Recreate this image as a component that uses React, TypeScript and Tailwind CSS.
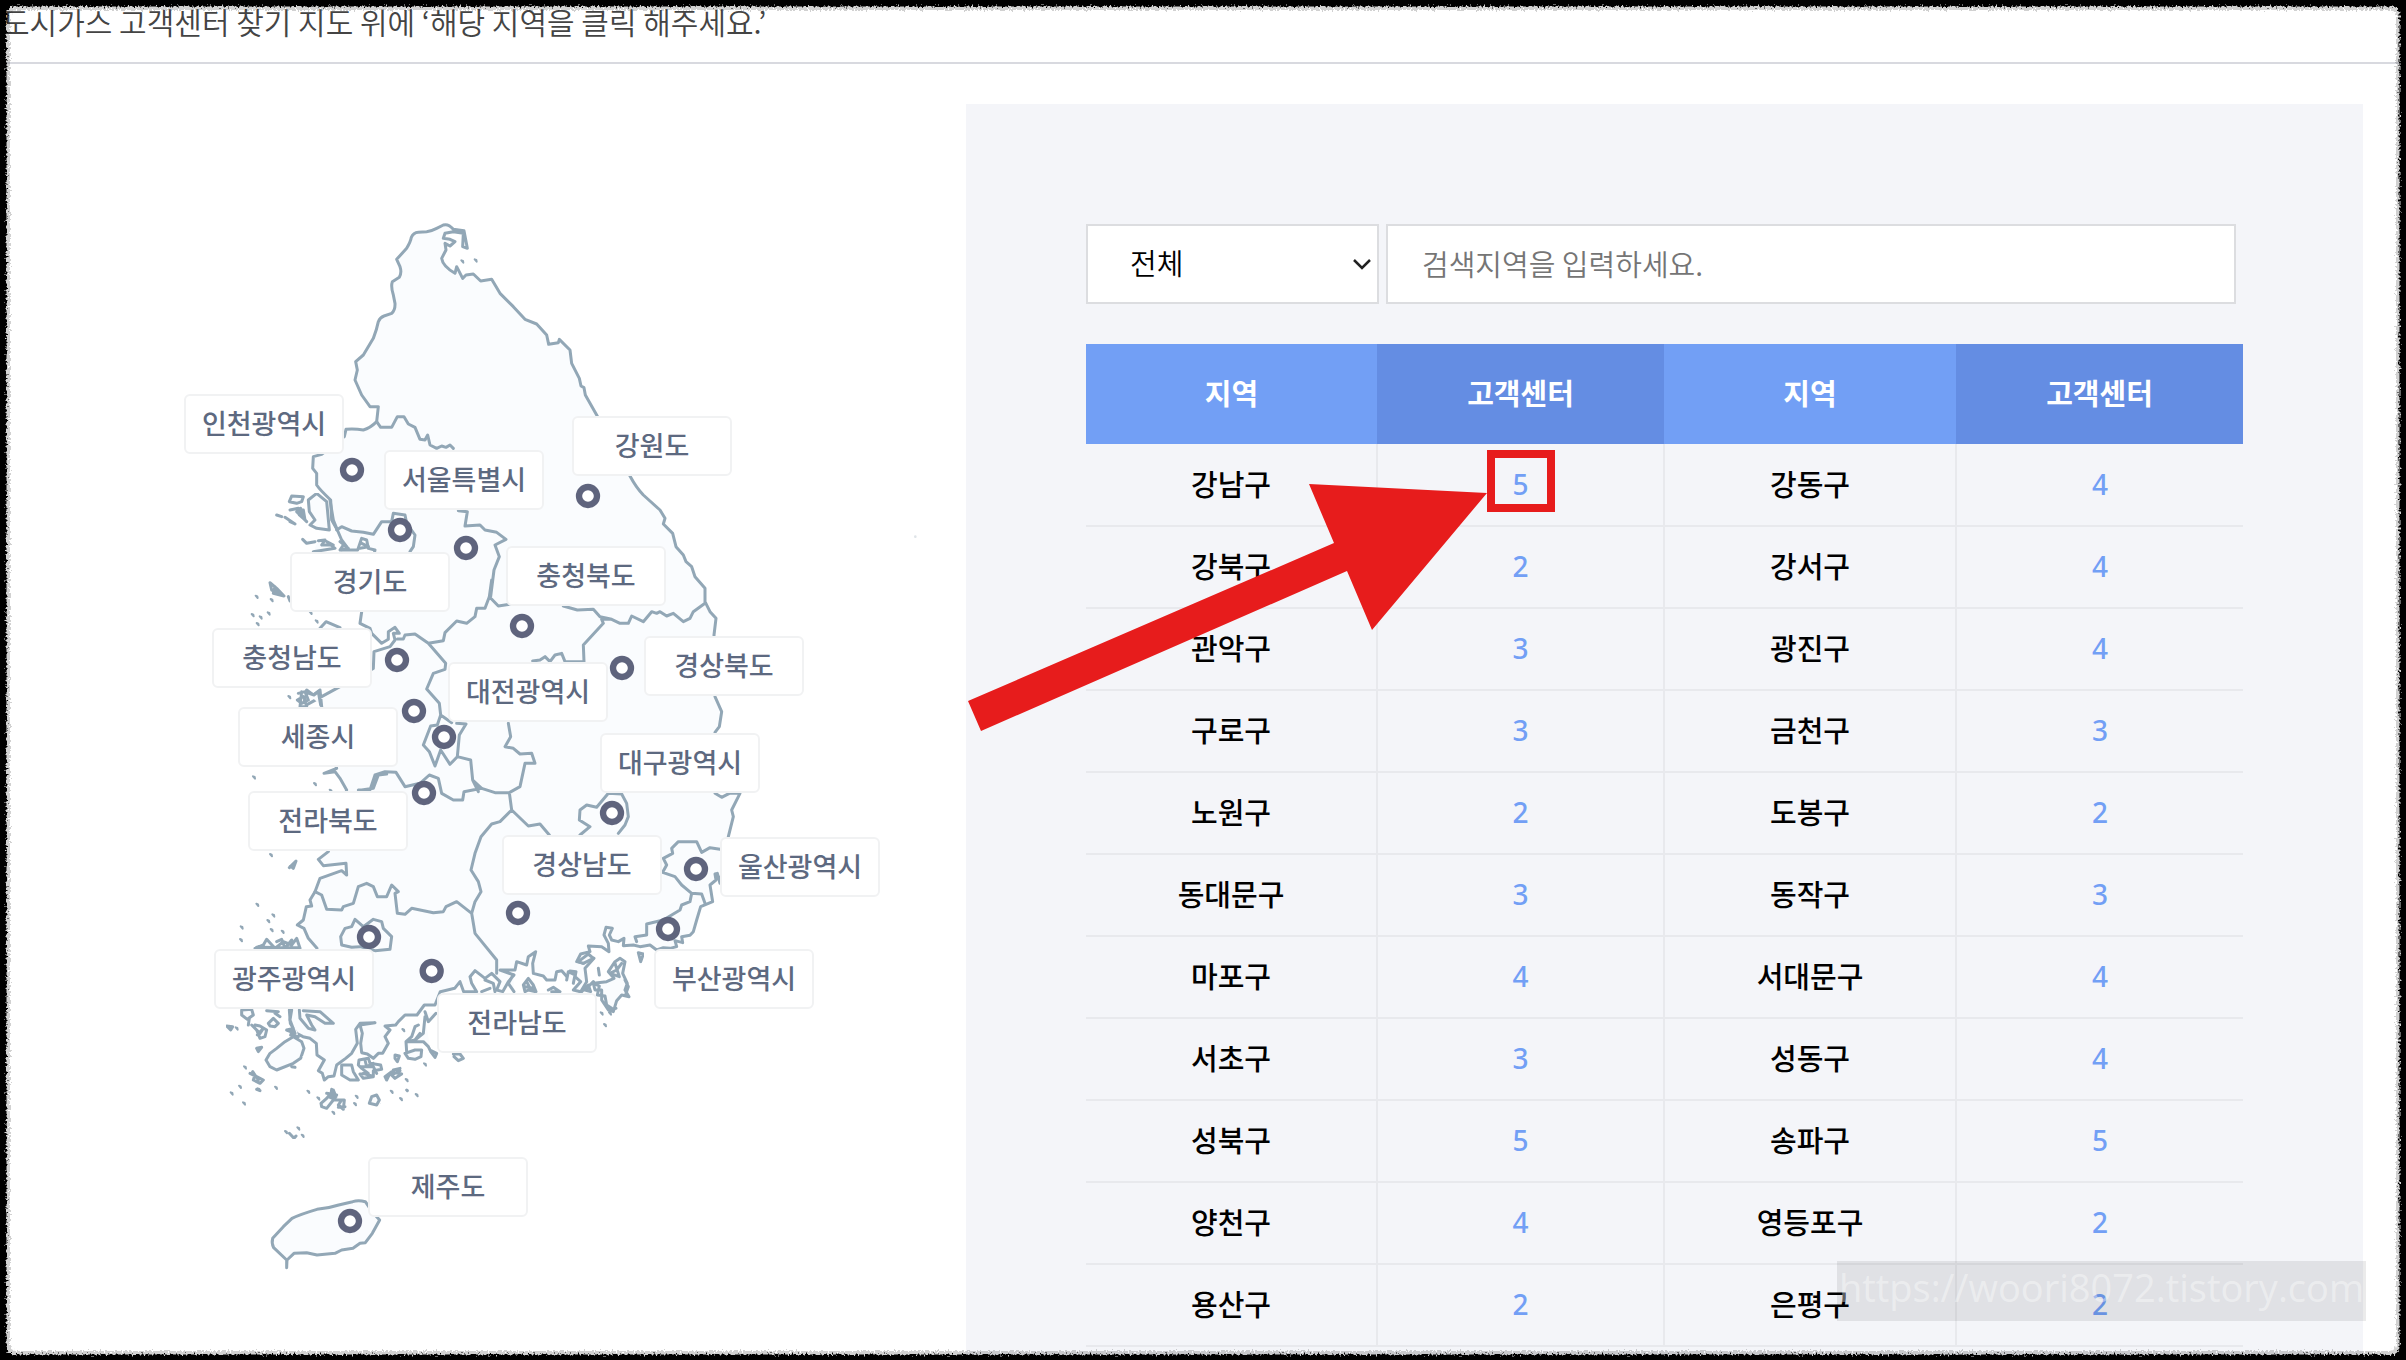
const labels = [
  { name: "인천광역시", pos: "left-[24px] top-[194px]" },
  { name: "서울특별시", pos: "left-[224px] top-[250px]" },
  { name: "강원도", pos: "left-[412px] top-[216px]" },
  { name: "경기도", pos: "left-[130px] top-[352px]" },
  { name: "충청북도", pos: "left-[346px] top-[346px]" },
  { name: "충청남도", pos: "left-[52px] top-[428px]" },
  { name: "경상북도", pos: "left-[484px] top-[436px]" },
  { name: "대전광역시", pos: "left-[288px] top-[462px]" },
  { name: "세종시", pos: "left-[78px] top-[507px]" },
  { name: "대구광역시", pos: "left-[440px] top-[533px]" },
  { name: "전라북도", pos: "left-[88px] top-[591px]" },
  { name: "경상남도", pos: "left-[342px] top-[635px]" },
  { name: "울산광역시", pos: "left-[560px] top-[637px]" },
  { name: "부산광역시", pos: "left-[494px] top-[749px]" },
  { name: "광주광역시", pos: "left-[54px] top-[749px]" },
  { name: "전라남도", pos: "left-[277px] top-[793px]" },
  { name: "제주도", pos: "left-[208px] top-[957px]" },
];

const pins = [
  [576, 810], [720, 990], [918, 1044], [1284, 888], [1086, 1278], [711, 1380],
  [762, 1533], [852, 1611], [792, 1779], [1386, 1404], [1356, 1839], [1608, 2007],
  [1524, 2187], [1074, 2139], [627, 2211], [815, 2313], [570, 3063],
];

const mainland =
  "M650 665 655 620 630 620 605 585 585 540 592 510 587 485 610 465 640 415 Q650 390 655 365 Q660 352 672 348 L695 340 Q706 330 705 310 L700 285 Q692 260 697 245 L718 232 Q726 218 720 200 L710 178 740 145 Q752 125 754 112 Q760 98 775 97 L800 95 Q815 93 830 85 L850 75 Q865 70 880 88 L912 92 922 145 908 140 910 100 880 95 855 100 850 115 870 118 885 125 870 138 855 130 858 150 845 175 Q848 198 885 220 L890 200 908 235 918 225 940 222 962 243 995 238 1020 280 1060 320 1095 358 1130 372 1160 405 1166 433 1195 428 1198 418 1230 450 1235 490 1258 535 1263 558 1272 563 1276 585 1310 645 1410 828 Q1428 862 1450 885 L1500 930 1515 955 1510 972 1538 1000 1548 1040 1570 1065 1578 1085 1595 1100 1605 1130 1635 1165 1635 1205 1650 1235 1668 1255 1662 1305 1665 1490 1685 1535 1678 1580 1665 1597 1665 1780 1685 1792 1708 1780 1740 1780 1715 1830 1720 1850 1705 1910 1680 2050 1672 2020 1665 2022 1668 2040 1650 2055 1658 2105 1622 2120 1610 2160 1600 2195 1590 2206 1565 2210 1568 2228 1545 2222 1550 2240 1530 2245 1510 2243 1490 2250 1470 2235 1440 2240 1420 2235 1390 2237 1392 2215 1375 2225 1355 2220 1348 2205 1357 2185 1338 2182 1332 2205 1345 2230 1347 2255 1325 2240 1285 2238 1290 2255 1262 2262 1250 2285 1270 2290 1280 2270 1302 2275 1275 2305 1280 2345 1262 2375 1240 2370 1262 2345 1245 2330 1248 2315 1230 2313 1225 2335 1205 2312 1190 2315 1185 2340 1160 2340 1150 2328 1120 2320 1118 2290 1127 2255 1105 2270 1100 2295 1070 2285 1065 2310 1020 2310 1062 2325 1045 2345 1028 2375 1010 2370 1020 2345 995 2320 975 2335 945 2312 930 2330 935 2350 950 2375 911 2375 900 2345 884 2365 841 2375 825 2415 793 2415 771 2445 735 2445 715 2465 707 2475 675 2478 690 2490 675 2510 685 2530 668 2560 655 2560 640 2575 622 2562 605 2558 602 2530 607 2500 600 2475 645 2468 600 2470 587 2488 592 2530 575 2560 557 2575 530 2595 522 2628 505 2630 493 2640 487 2620 475 2612 493 2580 471 2565 469 2530 450 2515 429 2510 410 2500 391 2470 388 2430 471 2245 445 2215 432 2185 412 2175 430 2160 439 2120 455 2118 450 2100 465 2075 480 2035 545 2012 560 2025 558 1990 490 1997 475 1978 505 1955 560 1770 540 1735 525 1715 492 1720 530 1705 485 1520 480 1470 460 1485 440 1470 430 1520 640 1405 642 1355 690 1340 705 1320 700 1300 718 1300 705 1282 685 1295 685 1318 665 1330 635 1300 630 1285 600 1270 605 1235 645 1050 625 1045 620 1020 605 1015 593 1050 545 1050 560 1040 545 1020 532 990 515 960 512 900 Q480 870 470 855 L470 820 458 805 460 770 485 763 553 710 558 688 Q585 686 610 690 Q630 685 650 665Z";

const borders =
  "M650 665 662 682 695 682 712 650 732 650 745 672 765 682 780 718 795 720 803 705 810 735 830 745 845 738 858 742 870 735 880 745" +
  " M895 932 922 935 915 978 960 975 975 990 1010 997 1038 1018 1005 1035 1018 1070 1002 1110 992 1190" +
  " M530 990 545 980 575 993 610 997 640 1003 665 965 695 965 700 940 735 945 740 970 765 1005 760 1040 750 1055" +
  " M995 1140 988 1190 975 1225 950 1225 945 1250 920 1270 890 1263 855 1298 850 1322 805 1330 765 1302 735 1305 730 1317 712 1317" +
  " M988 1190 1015 1218 1050 1213 M805 1330 857 1390 855 1408 820 1420 800 1467 838 1510 842 1545 875 1568" +
  " M842 1545 832 1575 812 1578 790 1635 808 1655 825 1698 842 1650 870 1693 892 1670 898 1605 918 1572 890 1570" +
  " M892 1670 932 1680 938 1740 965 1765 1005 1778 1048 1778 1080 1760 1095 1690 1125 1690 1115 1660 1080 1662 1060 1645 1035 1640 1052 1610 1045 1570" +
  " M595 1770 630 1770 645 1725 675 1715 708 1717 735 1760 780 1750 808 1725 835 1735 845 1780 880 1800 908 1800 912 1775 965 1765" +
  " M605 1770 640 1765 655 1725 680 1722 M938 1740 955 1775 950 1755" +
  " M1048 1778 1055 1830 1020 1865 995 1872 963 1910 945 1960 933 2010 955 2045 963 2075 945 2105 935 2140 945 2200 1010 2280 1010 2320" +
  " M1055 1830 1105 1878 1140 1872 1168 1905 M935 2140 890 2105 858 2120 850 2135 820 2138 755 2125 735 2143 712 2140 705 2080 715 2075 695 2055 680 2090 652 2090 640 2060 620 2050 595 2060 580 2110 550 2120 545 2130 500 2128 485 2085 465 2075" +
  " M1118 1383 1140 1380 1155 1370 1170 1385 1185 1365 1205 1360 1215 1385 1272 1385 1270 1335 1330 1270 1325 1258 1355 1258" +
  " M1210 1218 1252 1230 1300 1228 1320 1250 1355 1258 1380 1270 1405 1270 1415 1248 1450 1265 1475 1235 1490 1240 1500 1235 1520 1248 1540 1240 1570 1265 1590 1255 1600 1235 1635 1210" +
  " M1260 1905 1290 1880 1258 1860 1260 1830 1280 1815 1310 1822 1345 1780 1385 1782 1400 1810 1405 1850 1395 1875 1375 1900" +
  " M1680 1948 1650 1943 1625 1957 1610 1925 1555 1925 1535 1945 1538 1960 1510 1975 1520 1995 1508 2017 1545 2030 1565 2055 1595 2080 1625 2082 1635 2110" +
  " M1595 2080 1590 2105 1565 2115 1560 2130 1510 2160 1460 2172 1460 2205 1425 2210 1430 2225" +
  " M575 2242 545 2235 542 2210 555 2185 575 2180 585 2158 610 2180 640 2158 665 2165 670 2185 695 2210 690 2248 645 2252 600 2240Z";

const islands =
  "M445 900 470 880 500 905 508 990 470 985 450 975 465 960 448 935Z M510 900 520 960 530 985" +
  " M388 905 395 888 430 890 425 905 410 910Z M390 930 415 925 418 945 435 960 430 930 410 935 440 965" +
  " M415 940 428 950 422 925 432 945 M350 945 365 950 M375 952 405 972 390 965 M428 1018 440 1030 465 1025 M475 1022 495 1020 485 1035 520 1035 500 1025 525 1045 460 1055" +
  " M540 1025 565 1045 540 1050 550 1035 M605 1030 625 1040 600 1045" +
  " M330 1148 350 1165 372 1188 340 1180 345 1160 355 1178 335 1170Z M385 1190 390 1203 M480 1285 498 1265 540 1283" +
  " M415 1480 435 1475 445 1500 425 1510 412 1500 430 1490 M425 1475 420 1520 440 1520 432 1490 M440 1478 462 1485 475 1475 482 1515" +
  " M388 2003 408 1983 400 2005 392 1998Z" +
  " M285 2245 310 2235 320 2218 345 2245 370 2225 395 2235 410 2215 420 2245 M350 2225 365 2218 375 2245 395 2220 M290 2242 420 2243" +
  " M245 2430 275 2428 280 2445 262 2458 245 2445Z M325 2470 340 2455 355 2470 345 2480 330 2478Z M320 2432 355 2435 M345 2440 360 2450" +
  " M200 2478 218 2480 212 2490Z M285 2475 300 2478 320 2490 315 2510 300 2515 290 2490 275 2475 300 2500 310 2485 292 2505" +
  " M268 2455 265 2475 M430 2432 480 2435 520 2470 495 2470 465 2450 440 2445 455 2475 465 2490 445 2485 420 2455 418 2430" +
  " M395 2430 390 2460 405 2500 380 2490 400 2485 392 2505 415 2510" +
  " M318 2580 330 2560 350 2545 375 2525 400 2510 425 2525 432 2545 422 2575 400 2590 350 2610 330 2600Z M395 2600 405 2602" +
  " M290 2545 305 2542 295 2555Z M270 2620 290 2630 310 2640 300 2650 280 2640 285 2625 295 2640 278 2615 M290 2668 300 2672" +
  " M545 2595 575 2595 580 2615 595 2640 570 2640 545 2625Z" +
  " M597 2580 625 2575 630 2590 662 2595 665 2608 640 2612 640 2630 610 2635 600 2622 625 2620 605 2605 595 2595Z M600 2600 640 2600 650 2620 M615 2580 620 2600 640 2590 M610 2620 635 2628" +
  " M675 2630 695 2615 725 2622 705 2635 690 2620 680 2640Z M700 2610 720 2605 M695 2625 720 2612 M705 2565 718 2568 712 2585 705 2575Z" +
  " M735 2560 765 2550 785 2550 783 2570 765 2578 745 2575Z M740 2555 738 2525 755 2510 765 2480 775 2475 M780 2500 765 2520 M795 2450 790 2500 765 2520 740 2525 790 2525 805 2540 810 2550 830 2560 825 2572 812 2555" +
  " M795 2435 805 2465 828 2440 M880 2562 900 2562 910 2575 895 2582 882 2570" +
  " M483 2710 500 2695 520 2670 528 2690 505 2690 530 2700 553 2700 550 2728 535 2715 545 2700 520 2700 500 2725 485 2720Z M500 2680 530 2685 M515 2668 512 2690 M535 2722 555 2720" +
  " M628 2710 635 2690 650 2685 658 2700 650 2715Z" +
  " M1365 2285 1380 2275 1395 2285 1388 2320 1402 2350 1395 2370 1407 2390 1385 2385 1370 2402 1360 2435 1345 2430 1325 2400 1325 2370 1305 2370 1300 2350 1340 2345 1362 2335 1345 2315Z" +
  " M1300 2350 1318 2358 1312 2385 1335 2388 1340 2415 1355 2425 M1385 2290 1370 2310 1350 2320 1378 2330 1365 2290" +
  " M1395 2340 1405 2360 1398 2380 M1345 2430 1368 2425 M1315 2305 1318 2325" +
  " M1435 2258 1450 2262 1442 2285Z M1090 2355 1105 2335 1120 2355 1128 2375 1105 2370 1095 2375Z M1100 2345 1112 2368 M1095 2360 1120 2365" +
  " M1165 2370 1180 2362 1200 2375 1175 2375 M1220 2340 1225 2315 1245 2325 1240 2350 M1060 2325 1045 2350 1062 2375" +
  " M975 2340 1000 2350 1005 2375 M965 2375 990 2365 M1260 2380 1285 2355 1292 2375 1275 2370 1300 2345" +
  " M1255 2285 1285 2262 1300 2275 1270 2290Z M388 2800 402 2815 408 2808 M740 2670 742 2672";

const specks = [
  [907, 184], [947, 181], [290, 1190], [335, 1200], [278, 1245], [326, 1240], [293, 1272], [302, 1252], [452, 1238],
  [470, 1264], [388, 1491], [282, 1732], [465, 1752], [512, 1772], [333, 1965], [292, 2114], [340, 2146], [325, 2163],
  [245, 2182], [243, 2220], [368, 2195], [335, 2190], [230, 2485], [255, 2602], [240, 2660], [215, 2680], [252, 2710],
  [348, 2663], [445, 2675], [475, 2695], [590, 2690], [695, 2675], [770, 2685], [723, 2697], [740, 2640], [795, 2593],
  [520, 2738], [1335, 2475], [1350, 2440], [1325, 2440], [378, 2796], [415, 2785], [428, 2807], [296, 2668], [730, 2490],
  [585, 2712],
];

const rows = [
  ["강남구", 5, "강동구", 4],
  ["강북구", 2, "강서구", 4],
  ["관악구", 3, "광진구", 4],
  ["구로구", 3, "금천구", 3],
  ["노원구", 2, "도봉구", 2],
  ["동대문구", 3, "동작구", 3],
  ["마포구", 4, "서대문구", 4],
  ["서초구", 3, "성동구", 4],
  ["성북구", 5, "송파구", 5],
  ["양천구", 4, "영등포구", 2],
  ["용산구", 2, "은평구", 2],
];

function KoreaMap() {
  return (
    <div className="relative mt-[96px] h-[1100px] w-[760px] shrink-0">
      <svg className="block h-full w-full" viewBox="0 0 2280 3300" fill="none" stroke="#92a7b6" strokeWidth="9" strokeLinejoin="round" strokeLinecap="round">
        <defs>
          <filter id="coast" x="0" y="0" width="100%" height="100%">
            <feTurbulence type="fractalNoise" baseFrequency="0.12" numOctaves="2" seed="4" />
            <feDisplacementMap in="SourceGraphic" scale="4" xChannelSelector="R" yChannelSelector="G" />
          </filter>
        </defs>
        <path d={mainland} fill="#fafcfe" />
        <path d={borders} />
        <g filter="url(#coast)">
          <path d={islands} fill="#fafcfe" />
        </g>
        <path
          d="M640 3040 616 3005 Q595 3000 578 3005 L536 3015 Q505 3025 471 3028 Q420 3043 396 3055 L370 3080 338 3115 Q334 3130 341 3143 L380 3180 380 3203 381 3180 402 3160 440 3158 471 3165 525 3160 545 3150 579 3145 600 3130 616 3128 637 3100 659 3060Z"
          fill="#fafcfe"
        />
        {specks.map(([x, y]) => (
          <path key={`${x}-${y}`} d={`M${x - 3} ${y - 3}l5 2 1 5z`} strokeWidth="6" />
        ))}
        <circle cx="2266" cy="1010" r="2" stroke="#dfe4e8" strokeWidth="4" />
        {pins.map(([x, y]) => (
          <circle key={`${x}-${y}`} cx={x} cy={y} r="27" fill="#fff" stroke="#5f647d" strokeWidth="19" />
        ))}
      </svg>
      {labels.map((l) => (
        <button
          key={l.name}
          type="button"
          className={`absolute ${l.pos} flex h-[60px] w-[160px] items-center justify-center rounded-md border-2 border-[#f1f2f3] bg-white pb-[2px] text-[27px] font-medium text-[#5d6980]`}
        >
          {l.name}
        </button>
      ))}
    </div>
  );
}

function CenterTable() {
  return (
    <table className="mt-10 w-full table-fixed border-collapse text-center text-[29px] leading-[40px]">
      <thead>
        <tr className="h-[100px] text-white">
          <th className="w-[291px] bg-[#729ff5] pb-1 font-bold">지역</th>
          <th className="w-[287px] bg-[#648de3] pb-1 font-bold">고객센터</th>
          <th className="w-[292px] bg-[#729ff5] pb-1 font-bold">지역</th>
          <th className="w-[287px] bg-[#648de3] pb-1 font-bold">고객센터</th>
        </tr>
      </thead>
      <tbody>
        {rows.map(([a, aCount, b, bCount]) => (
          <tr key={a} className="h-[82px] border-b-2 border-[#e8e9ed]">
            <td className="border-r-2 border-[#e8e9ed] pb-1 font-medium text-black">{a}</td>
            <td className="border-r-2 border-[#e8e9ed] pb-1">
              <a href="#" className="font-['Noto_Sans'] text-[28px] font-medium text-[#729ff5]">{aCount}</a>
            </td>
            <td className="border-r-2 border-[#e8e9ed] pb-1 font-medium text-black">{b}</td>
            <td className="pb-1">
              <a href="#" className="font-['Noto_Sans'] text-[28px] font-medium text-[#729ff5]">{bCount}</a>
            </td>
          </tr>
        ))}
      </tbody>
    </table>
  );
}

function TornFrame() {
  return (
    <svg className="pointer-events-none absolute inset-0 h-full w-full" fill="none">
      <defs>
        <filter id="torn" x="0" y="0" width="100%" height="100%">
          <feTurbulence type="fractalNoise" baseFrequency="0.5" numOctaves="2" seed="7" />
          <feDisplacementMap in="SourceGraphic" scale="7" xChannelSelector="R" yChannelSelector="G" />
        </filter>
      </defs>
      <g filter="url(#torn)">
        <rect x="-10" y="-10" className="h-[calc(100%+20px)] w-[calc(100%+20px)]" rx="26" stroke="#000" strokeOpacity="0.18" strokeWidth="40" />
        <rect x="-10" y="-10" className="h-[calc(100%+20px)] w-[calc(100%+20px)]" rx="24" stroke="#000" strokeWidth="33" />
      </g>
    </svg>
  );
}

export default function App() {
  return (
    <div className="relative min-h-screen overflow-hidden bg-white font-['Noto_Sans_CJK_KR','Noto_Sans',sans-serif]">
      <header className="flex h-16 items-start border-b-2 border-[#d8d9df] pl-[2px]">
        <p className="text-[30px] leading-[42px] font-[350] whitespace-nowrap text-[#444]">
          도시가스 고객센터 찾기 지도 위에 ‘해당 지역을 클릭 해주세요.’
        </p>
      </header>

      <main className="grid grid-cols-[966fr_1397fr] pr-[43px]">
        <section className="flex justify-end pt-10 pr-[46px]">
          <KoreaMap />
        </section>

        <section className="relative mt-10 bg-[#f4f5f9] px-[120px] pt-[120px] pb-[14px]">
          <form className="flex gap-[7px] pr-[7px] text-[29px]">
            <div className="relative w-[293px] shrink-0">
              <select aria-label="지역 구분" className="h-20 w-full appearance-none border-2 border-[#dcdde0] bg-white pb-[2px] pl-[42px] font-[350] text-black">
                <option>전체</option>
              </select>
              <svg className="pointer-events-none absolute top-[34px] right-2 h-3 w-[18px]" viewBox="0 0 18 12" fill="none" stroke="#222" strokeWidth="2.5">
                <path d="M1 2l8 8 8-8" />
              </svg>
            </div>
            <input
              type="text"
              aria-label="검색지역"
              placeholder="검색지역을 입력하세요."
              className="h-20 min-w-0 flex-1 border-2 border-[#dcdde0] bg-white px-[34px] pb-[2px] font-[350] text-black placeholder:text-[#757575]"
            />
          </form>

          <CenterTable />

          <svg className="pointer-events-none absolute top-[340px] left-0 h-[300px] w-[600px]" viewBox="966 444 600 300">
            <path d="M968 701 1334 543 1309 484 1487 493 1372 630 1347 571 981 731Z" fill="#e71c1c" />
            <rect x="1491" y="454" width="60" height="54" fill="none" stroke="#e71c1c" strokeWidth="8" />
          </svg>
        </section>
      </main>

      <div className="absolute right-10 bottom-10 flex h-[60px] w-[529px] items-center justify-center bg-black/8 pb-2 font-['Open_Sans',sans-serif] text-[38px] text-white/40">
        https://woori8072.tistory.com
      </div>

      <TornFrame />
    </div>
  );
}
